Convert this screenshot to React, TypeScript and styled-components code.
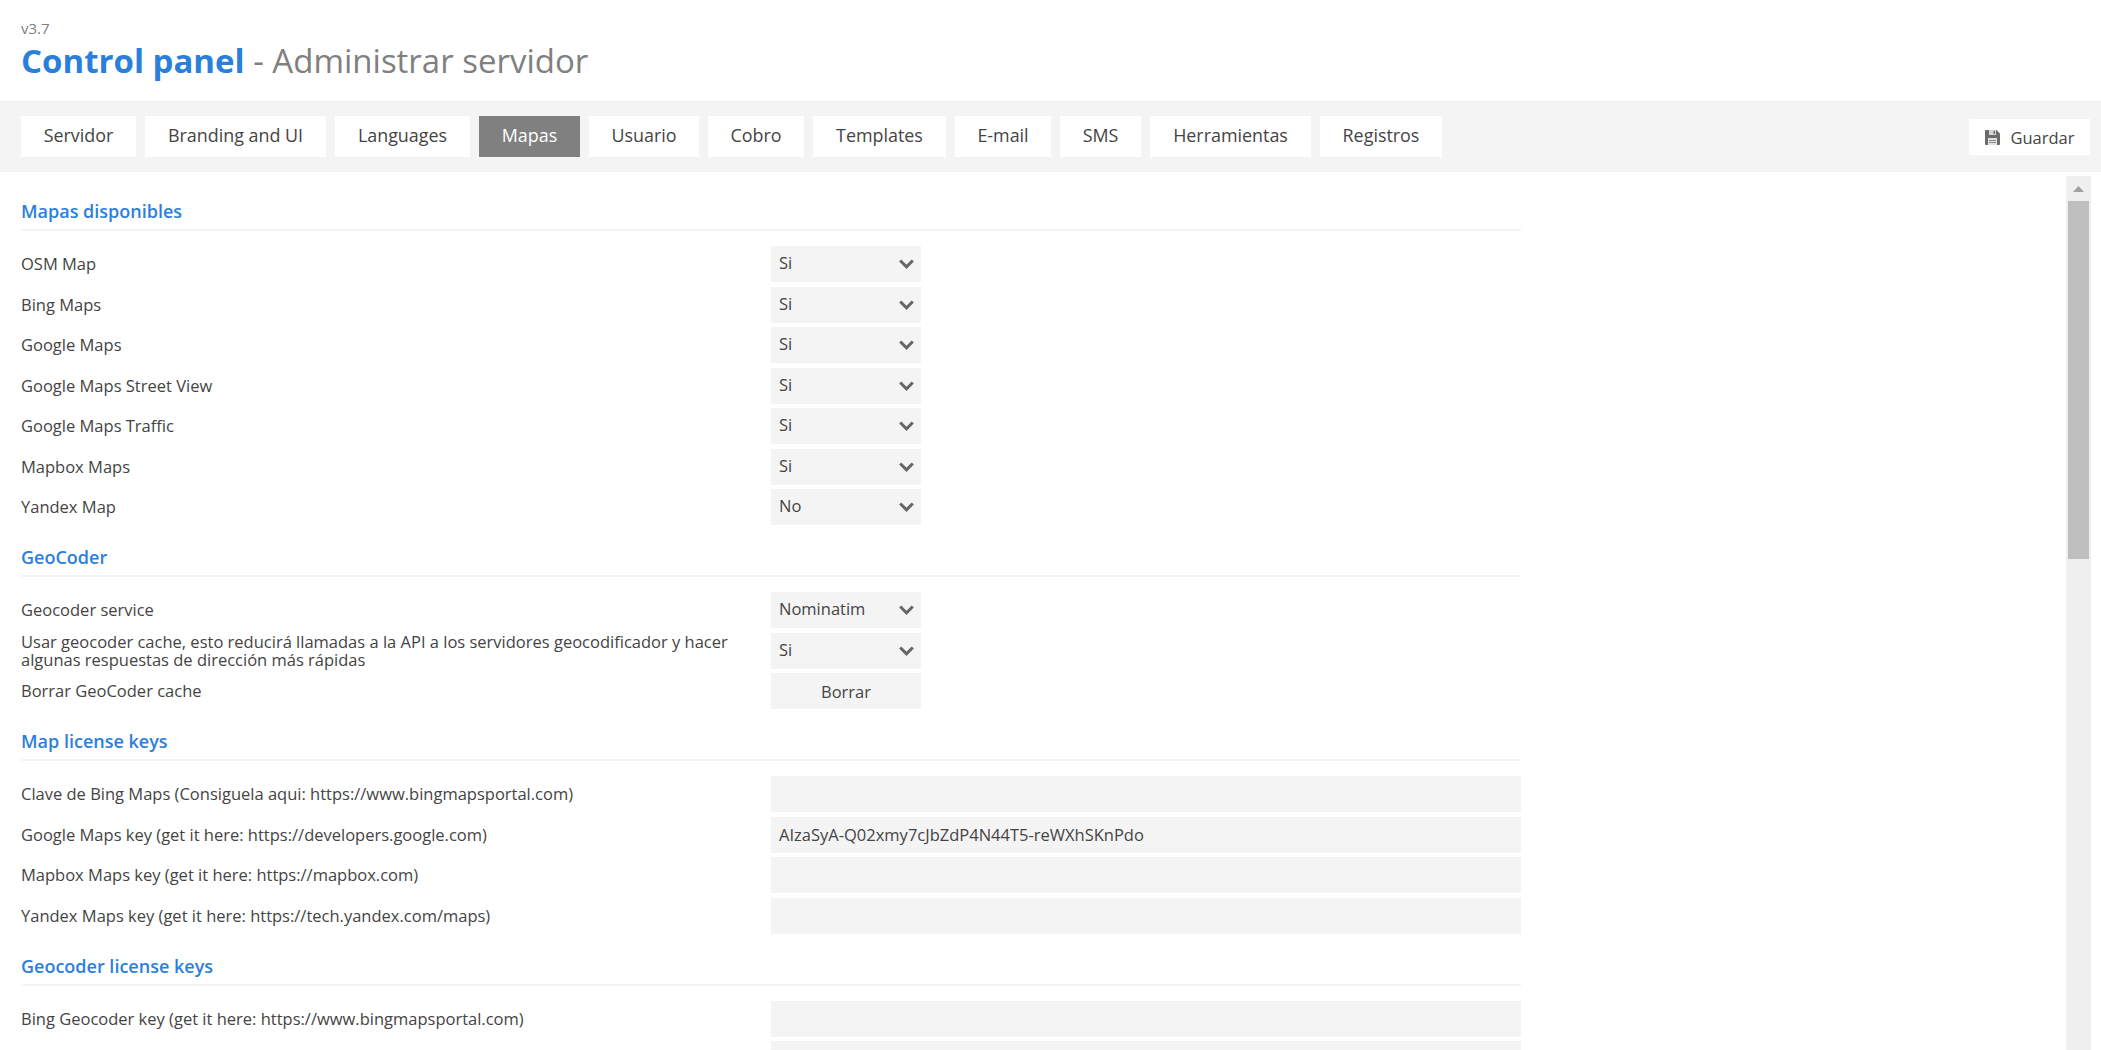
import React from "react";
import styled, { createGlobalStyle } from "styled-components";

const Global = createGlobalStyle`
  html, body { margin: 0; padding: 0; background: #fff; height: 100%; overflow: hidden; }
  * { box-sizing: border-box; }
  body { font-family: "Open Sans", "Liberation Sans", sans-serif; color: #444; font-size: 15px; }
`;

const Page = styled.div`
  width: 2101px;
  height: 1050px;
  display: flex;
  flex-direction: column;
  overflow: hidden;
`;
const Header = styled.header`
  height: 101px;
  padding: 19px 21px 0;
`;
const Version = styled.div`
  font-size: 15px;
  line-height: 19px;
  color: #808080;
`;
const Title = styled.h1`
  margin: 0;
  font-size: 33px;
  line-height: 46px;
  font-weight: 400;
  color: #808080;
  white-space: nowrap;
  b { font-weight: 700; color: #2b7fdc; }
`;
const Toolbar = styled.nav`
  height: 71px;
  background: #f4f4f4;
  display: flex;
  align-items: flex-start;
  padding: 15px 11px 0 21px;
  gap: 9px;
`;
const Tab = styled.button<{ $active?: boolean; $w: number }>`
  width: ${(p) => p.$w}px;
  height: 41px;
  border: 0;
  padding: 0 0 3px;
  font: 400 17.9px "Open Sans", sans-serif;
  background: ${(p) => (p.$active ? "#808080" : "#fff")};
  color: ${(p) => (p.$active ? "#fff" : "#444")};
`;
const Save = styled.button`
  margin-left: auto;
  margin-top: 3px;
  width: 121px;
  height: 36px;
  border: 0;
  padding: 0 0 0 1px;
  background: #fff;
  display: flex;
  align-items: center;
  justify-content: center;
  gap: 10px;
  font: 400 16.5px "Open Sans", sans-serif;
  color: #444;
`;
const Body = styled.div`
  flex: 1;
  min-height: 0;
  display: flex;
`;
const Content = styled.main`
  width: 1500px;
  margin-left: 21px;
  overflow: hidden;
`;
const Spacer = styled.div`
  flex: 1;
`;
const Scrollbar = styled.div`
  width: 25px;
  margin: 4px 10px 0 0;
  background: #efefef;
  display: flex;
  flex-direction: column;
  align-items: center;
`;
const ScrollUp = styled.div`
  height: 25px;
  width: 100%;
  display: flex;
  align-items: center;
  justify-content: center;
`;
const ScrollThumb = styled.div`
  width: 21px;
  height: 358px;
  background: #bfbfbf;
`;
const Section = styled.section`
  padding-top: 14.5px;
  &:first-child { padding-top: 26px; }
`;
const SectionTitle = styled.h2`
  margin: 0 0 15px;
  height: 33px;
  font-size: 18px;
  line-height: 26px;
  font-weight: 600;
  color: #2b7fdc;
  border-bottom: 2px solid #f4f4f4;
`;
const Row = styled.div`
  display: flex;
  align-items: center;
  min-height: 36px;
  margin-bottom: 4.5px;
`;
const Label = styled.label`
  width: 750px;
  padding-right: 10px;
  font-size: 16.5px;
  line-height: 18px;
  color: #444;
  flex: none;
`;
const SelectBox = styled.div`
  width: 150px;
  height: 36px;
  background: #f4f4f4;
  display: flex;
  align-items: center;
  justify-content: space-between;
  padding: 0 7px 0 8px;
  font-size: 16.5px;
  line-height: 34px;
  color: #444;
`;
const SelectValue = styled.span`
  display: block;
  height: 36px;
  line-height: 34px;
`;
const ActionButton = styled.button`
  width: 150px;
  height: 36px;
  border: 0;
  background: #f4f4f4;
  font: 400 16.5px "Open Sans", sans-serif;
  color: #444;
`;
const TextInput = styled.input`
  width: 750px;
  height: 36px;
  border: 0;
  background: #f4f4f4;
  padding: 0 8px;
  font: 400 16.5px "Open Sans", sans-serif;
  color: #444;
  outline: none;
`;

const Chevron = () => (
  <svg width="15" height="10" viewBox="0 0 15 10" fill="none">
    <path d="M1.200 1.500 7.500 7.800 13.800 1.500" stroke="#666" strokeWidth="3" />
  </svg>
);

const SaveIcon = () => (
  <svg width="15" height="15" viewBox="0 0 15 15">
    <path fill="#6b6b6b" d="M0 1a1 1 0 0 1 1-1h10.500L15 3.500V14a1 1 0 0 1-1 1H1a1 1 0 0 1-1-1V1Z" />
    <path fill="#d4d4d4" d="M4 0h7v5H4z" />
    <path fill="#6b6b6b" d="M8.500 1h1.500v3H8.500z" />
    <path fill="#e2e2e2" d="M3 8h9v7H3z" />
    <path fill="#8a8a8a" d="M4 10h7v1H4zM4 12h7v1H4z" />
  </svg>
);

const Select = ({ label, value }: { label: string; value: string }) => (
  <Row>
    <Label>{label}</Label>
    <SelectBox>
      <SelectValue>{value}</SelectValue>
      <Chevron />
    </SelectBox>
  </Row>
);

const KeyRow = ({ label, value }: { label: string; value?: string }) => (
  <Row>
    <Label>{label}</Label>
    <TextInput readOnly value={value ?? ""} />
  </Row>
);

const tabs: [string, number][] = [
  ["Servidor", 115],
  ["Branding and UI", 181],
  ["Languages", 135],
  ["Mapas", 101],
  ["Usuario", 110],
  ["Cobro", 96],
  ["Templates", 133],
  ["E-mail", 96],
  ["SMS", 81],
  ["Herramientas", 161],
  ["Registros", 122],
];

const maps: [string, string][] = [
  ["OSM Map", "Si"],
  ["Bing Maps", "Si"],
  ["Google Maps", "Si"],
  ["Google Maps Street View", "Si"],
  ["Google Maps Traffic", "Si"],
  ["Mapbox Maps", "Si"],
  ["Yandex Map", "No"],
];

export default function App() {
  return (
    <Page>
      <Global />
      <Header>
        <Version>v3.7</Version>
        <Title>
          <b>Control panel</b> - Administrar servidor
        </Title>
      </Header>
      <Toolbar>
        {tabs.map(([t, w]) => (
          <Tab key={t} $w={w} $active={t === "Mapas"}>
            {t}
          </Tab>
        ))}
        <Save>
          <SaveIcon />
          Guardar
        </Save>
      </Toolbar>
      <Body>
        <Content>
          <Section>
            <SectionTitle>Mapas disponibles</SectionTitle>
            {maps.map(([l, v]) => (
              <Select key={l} label={l} value={v} />
            ))}
          </Section>
          <Section>
            <SectionTitle>GeoCoder</SectionTitle>
            <Select label="Geocoder service" value="Nominatim" />
            <Select
              label="Usar geocoder cache, esto reducirá llamadas a la API a los servidores geocodificador y hacer algunas respuestas de dirección más rápidas"
              value="Si"
            />
            <Row>
              <Label>Borrar GeoCoder cache</Label>
              <ActionButton>Borrar</ActionButton>
            </Row>
          </Section>
          <Section>
            <SectionTitle>Map license keys</SectionTitle>
            <KeyRow label="Clave de Bing Maps (Consiguela aqui: https://www.bingmapsportal.com)" />
            <KeyRow
              label="Google Maps key (get it here: https://developers.google.com)"
              value="AIzaSyA-Q02xmy7cJbZdP4N44T5-reWXhSKnPdo"
            />
            <KeyRow label="Mapbox Maps key (get it here: https://mapbox.com)" />
            <KeyRow label="Yandex Maps key (get it here: https://tech.yandex.com/maps)" />
          </Section>
          <Section>
            <SectionTitle>Geocoder license keys</SectionTitle>
            <KeyRow label="Bing Geocoder key (get it here: https://www.bingmapsportal.com)" />
            <KeyRow label="" />
          </Section>
        </Content>
        <Spacer />
        <Scrollbar>
          <ScrollUp>
            <svg width="11" height="6" viewBox="0 0 11 6">
              <path d="M5.500 0 11 6H0Z" fill="#a0a0a0" />
            </svg>
          </ScrollUp>
          <ScrollThumb />
        </Scrollbar>
      </Body>
    </Page>
  );
}
